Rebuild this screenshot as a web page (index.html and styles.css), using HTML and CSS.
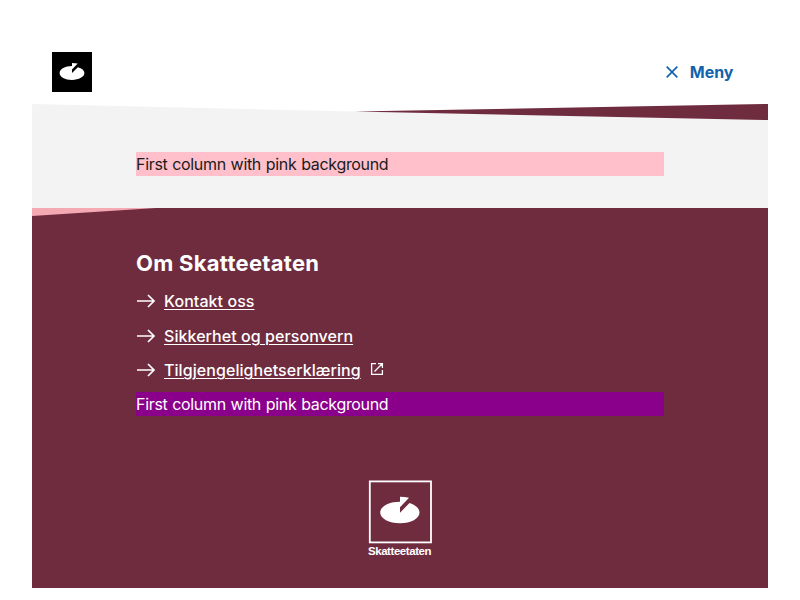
FILE: index.html
```
<!DOCTYPE html>
<html lang="no">
<head>
<meta charset="utf-8">
<title>Skatteetaten</title>
<link rel="stylesheet" href="styles.css">
</head>
<body>
<header class="header">
  <svg class="header-logo" viewBox="0 0 40 40"><rect width="40" height="40"/><path fill="#fff" d="M20 14C13 14 7.600 17 7.600 21S13 27.900 20 27.900s12.400-3.100 12.400-6.900c0-2.500-2.500-4.500-6.500-5.700L20 21z"/><path fill="#fff" d="M20 11q3 0 5.700.600L20 17.500z"/></svg>
  <button class="menu"><svg class="menu-icon" viewBox="0 0 24 24"><path d="m6.700 6.700 10.600 10.600M17.300 6.700 6.700 17.300" stroke="currentColor" stroke-width="1.700"/></svg><span>Meny</span></button>
</header>
<main class="main">
  <svg class="wedge" viewBox="0 0 736 16" preserveAspectRatio="none"><path fill="#fff" d="M0 0H736L323 7.500z"/><path fill="#6f2c3f" d="M736 0V16L323 7.500z"/></svg>
  <div class="column pink">First column with pink background</div>
</main>
<footer class="footer">
  <svg class="footer-wedge" viewBox="0 0 124 8"><path fill="#f4a9b3" d="M0 0H124L0 8z"/></svg>
  <div class="column">
    <h2 class="title">Om Skatteetaten</h2>
    <ul class="links">
      <li><svg class="arrow" viewBox="0 0 20 20"><path d="M1 10H18M12 4l6 6-6 6"/></svg><a href="#">Kontakt oss</a></li>
      <li><svg class="arrow" viewBox="0 0 20 20"><path d="M1 10H18M12 4l6 6-6 6"/></svg><a href="#">Sikkerhet og personvern</a></li>
      <li><svg class="arrow" viewBox="0 0 20 20"><path d="M1 10H18M12 4l6 6-6 6"/></svg><a href="#">Tilgjengelighetserklæring</a><svg class="external" viewBox="0 0 14 14"><path d="M6 1.600H1.600V12.400H12.400V8M8 1.600H12.400V6M12.200 1.800 4.500 9.500"/></svg></li>
    </ul>
    <div class="purple">First column with pink background</div>
  </div>
  <svg class="footer-logo" viewBox="0 0 64 78"><rect x="1.800" y="1.400" width="61.200" height="61" fill="none" stroke="#fff" stroke-width="1.800"/><g fill="#fff"><path d="M32 21.700C21 21.700 12.200 26.400 12.200 32.500S21 43.300 32 43.300 51.500 38.600 51.500 32.500C51.500 28.400 47.500 24.900 41.500 23L32 32.700z"/><path d="M32 16.700q4.600 0 9 1L32 27.200z"/><text class="logo-text" x="0" y="75.400" textLength="63.500">Skatteetaten</text></g></svg>
</footer>
</body>
</html>
```
FILE: styles.css
```
body {
  margin: 32px;
  font: 400 16px/24px Inter, sans-serif;
  color: #1b1b1b;
  background: #fff;
}
svg { display: block; flex: none; }
.header {
  display: flex;
  align-items: center;
  justify-content: space-between;
  height: 72px;
  padding: 8px 34.500px 0 20px;
  box-sizing: border-box;
}
.header-logo { width: 40px; height: 40px; }
.menu {
  display: flex;
  align-items: center;
  gap: 6px;
  padding: 0;
  border: 0;
  background: none;
  color: #1362ae;
  font: 700 16px/24px Inter, sans-serif;
}
.menu-icon { width: 24px; height: 24px; }
.main { height: 104px; background: #f3f3f3; }
.wedge { width: 100%; height: 16px; margin-bottom: 32px; }
.column { width: 528px; margin: 0 auto; }
.pink { background: #ffc0cb; }
.pink, .purple { letter-spacing: -0.320px; word-spacing: 0.600px; }
.footer { height: 380px; background: #6f2c3f; color: #fff; }
.footer-wedge { width: 124px; height: 8px; }
.title { margin: 0; padding-top: 31px; font-size: 22px; line-height: 32px; font-weight: 700; letter-spacing: 0.280px; }
.links { list-style: none; margin: 8px 0 0; padding: 0 0 1px; }
.links li { display: flex; align-items: center; height: 28px; margin-bottom: 6.500px; }
.links a { color: #fff; font-weight: 500; letter-spacing: 0.060px; text-underline-offset: 2px; text-decoration-thickness: 1px; }
.arrow { width: 20px; height: 20px; margin-right: 8px; fill: none; stroke: #fff; stroke-width: 1.700; }
.external { width: 14px; height: 14px; margin: -3px 0 0 9px; fill: none; stroke: #fff; stroke-width: 1.300; }
.purple { background: #8b008b; }
.footer-logo { width: 64px; height: 78px; margin: 64px auto 0; }
.logo-text { font: 700 11.500px "Liberation Sans", sans-serif; }
```
